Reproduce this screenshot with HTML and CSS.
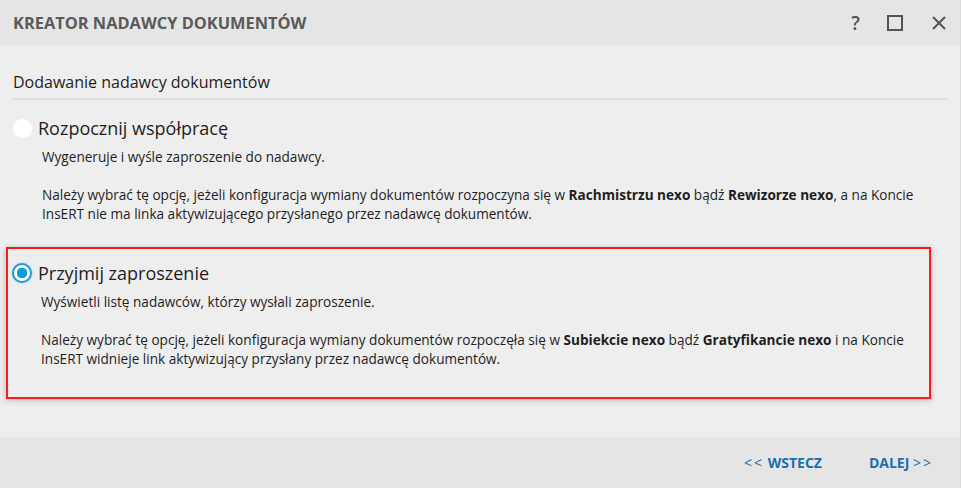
FILE: index.html
```html
<!DOCTYPE html>
<html lang="pl">
<head>
    <meta charset="UTF-8">
    <title>Kreator nadawcy dokumentów</title>
    <link rel="stylesheet" href="styles.css">
</head>
<body>
    <div class="window">
        <header class="titlebar">
            <h1>KREATOR NADAWCY DOKUMENTÓW</h1>
            <div class="win-buttons">
                <span class="win-help">?</span>
                <svg width="16" height="16" viewBox="0 0 16 16"><rect x="1" y="1" width="14" height="14" fill="none" stroke="#555" stroke-width="2"/></svg>
                <svg width="14" height="14" viewBox="0 0 14 14"><path d="M1 1 L13 13 M13 1 L1 13" stroke="#555" stroke-width="2"/></svg>
            </div>
        </header>

        <main class="content">
            <h2 class="section-title">Dodawanie nadawcy dokumentów</h2>

            <div class="option">
                <div class="option-head">
                    <span class="radio"></span>
                    <span class="option-label">Rozpocznij współpracę</span>
                </div>
                <p class="option-text">Wygeneruje i wyśle zaproszenie do nadawcy.</p>
                <p class="option-text">Należy wybrać tę opcję, jeżeli konfiguracja wymiany dokumentów rozpoczyna się w <b>Rachmistrzu nexo</b> bądź <b>Rewizorze nexo</b>, a na Koncie InsERT nie ma linka aktywizującego przysłanego przez nadawcę dokumentów.</p>
            </div>

            <div class="option selected">
                <div class="option-head">
                    <span class="radio checked"></span>
                    <span class="option-label">Przyjmij zaproszenie</span>
                </div>
                <p class="option-text">Wyświetli listę nadawców, którzy wysłali zaproszenie.</p>
                <p class="option-text">Należy wybrać tę opcję, jeżeli konfiguracja wymiany dokumentów rozpoczęła się w <b>Subiekcie nexo</b> bądź <b>Gratyfikancie nexo</b> i na Koncie InsERT widnieje link aktywizujący przysłany przez nadawcę dokumentów.</p>
            </div>
        </main>

        <footer class="footer">
            <a class="nav-btn" href="#"><span class="arrows">&lt;&lt;</span> WSTECZ</a>
            <a class="nav-btn" href="#">DALEJ <span class="arrows">&gt;&gt;</span></a>
        </footer>
    </div>
</body>
</html>
```

FILE: styles.css
```css
html, body {
    margin: 0;
    height: 100%;
}
body {
    background-color: #eeeeee;
    font-family: "Open Sans", "Noto Sans", sans-serif;
    color: #1e1e1e;
}
.window {
    display: flex;
    flex-direction: column;
    height: 488px;
    border-right: 1px solid #dcdcdc;
    box-sizing: border-box;
}
.titlebar {
    height: 45px;
    flex: none;
    background-color: #e5e5e5;
    display: flex;
    align-items: center;
    justify-content: space-between;
    padding: 0 14px 0 13px;
}
.titlebar h1 {
    margin: 0;
    font-size: 16.4px;
    font-weight: bold;
    color: #5a5a5a;
}
.win-buttons {
    display: flex;
    align-items: center;
}
.win-help {
    font-size: 19px;
    line-height: 20px;
    color: #555;
    font-weight: 600;
    margin-right: 27px;
}
.win-buttons svg + svg {
    margin-left: 29px;
}
.content {
    flex: 1;
    padding: 27px 13px 0 6px;
}
.section-title {
    margin: 0 0 0 7px;
    font-size: 16px;
    line-height: 20px;
    font-weight: normal;
    padding-bottom: 6px;
    border-bottom: 2px solid #dedede;
}
.option {
    padding: 16px 0 0 7px;
    margin-right: 16px;
}
.option.selected {
    margin-top: 24px;
    border: 2px solid #ff1a1a;
    box-shadow: 0 1px 6px rgba(0, 0, 0, 0.25);
    padding: 12px 0 29px 4px;
}
.option-head {
    display: flex;
    align-items: center;
    gap: 6px;
    height: 24px;
}
.radio {
    width: 19px;
    height: 19px;
    border-radius: 50%;
    background-color: #fff;
    box-sizing: border-box;
}
.radio.checked {
    width: 20px;
    height: 20px;
    border: 2px solid #1a9ad6;
    box-shadow: 0 0 2px #6bbbe0;
    background: radial-gradient(circle, #0e9be0 0 5px, #fff 5.5px);
}
.option-label {
    font-size: 18px;
    line-height: 24px;
}
.option-text {
    margin: 7px 0 0 29px;
    font-size: 13.6px;
    line-height: 19px;
}
.option-text + .option-text {
    margin-top: 19px;
}
.footer {
    height: 51px;
    flex: none;
    box-sizing: border-box;
    background-color: #e5e5e5;
    display: flex;
    align-items: center;
    justify-content: flex-end;
    gap: 47px;
    padding: 0 27px 0 0;
}
.nav-btn {
    color: #1a6fae;
    font-weight: bold;
    font-size: 14px;
    text-decoration: none;
}
.arrows {
    font-weight: normal;
    letter-spacing: 2px;
}
```
